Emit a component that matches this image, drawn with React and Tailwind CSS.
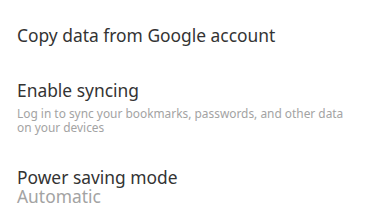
export default function App() {
  return (
    <div className="w-[384px] h-[216px] overflow-hidden bg-white font-['Noto_Sans',sans-serif]">
      <div className="flex flex-col px-[17px] pt-[25px]">
        {/* Copy data */}
        <div className="text-[17.4px] leading-[20px] text-[#333333]">
          Copy data from Google account
        </div>

        {/* Syncing */}
        <div className="mt-[35px] flex flex-col">
          <div className="text-[17.4px] leading-[20px] text-[#333333]">
            Enable syncing
          </div>
          <div className="mt-[6px] text-[11.9px] leading-[14px] text-[#a3a3a3] pr-[20px]">
            Log in to sync your bookmarks, passwords, and other data on your
            devices
          </div>
        </div>

        {/* Power saving */}
        <div className="mt-[34px] flex flex-col">
          <div className="text-[17.4px] leading-[19px] text-[#333333]">
            Power saving mode
          </div>
          <div className="text-[17.4px] leading-[19px] text-[#a3a3a3]">
            Automatic
          </div>
        </div>
      </div>
    </div>
  );
}
